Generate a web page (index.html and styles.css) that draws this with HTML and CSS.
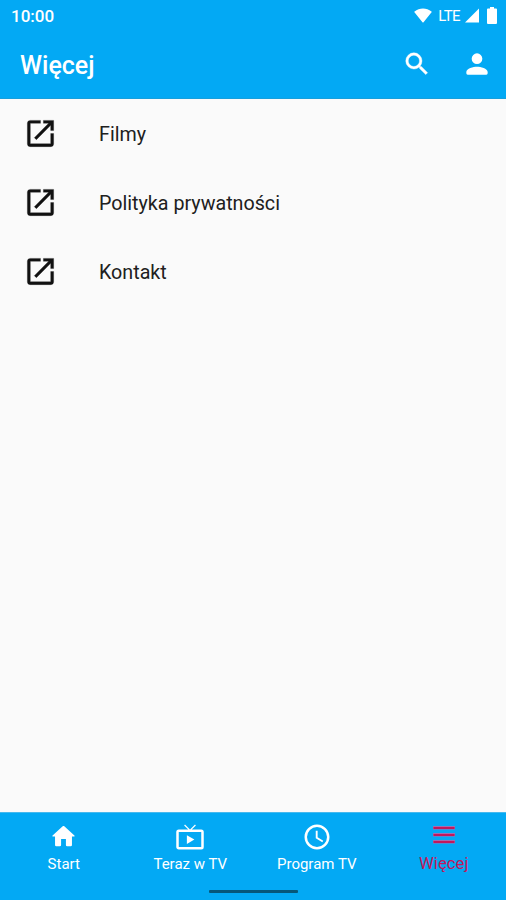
FILE: index.html
```html
<!DOCTYPE html>
<html lang="pl">
<head>
<meta charset="utf-8">
<title>Więcej</title>
<link rel="stylesheet" href="styles.css">
</head>
<body>
<header class="header">
  <div class="status">
    <span class="time">10:00</span>
    <svg class="wifi" viewBox="0 0 20 16"><path d="M.5 4.500Q0 3.900.6 3.500C6-.9 14-.9 19.400 3.500Q20 3.900 19.500 4.500L10.600 15.500Q10 16 9.400 15.500Z"/></svg>
    <span class="lte">LTE</span>
    <svg class="signal" viewBox="0 0 15 15"><path d="M15 0V15H0Z"/></svg>
    <svg class="battery" viewBox="0 0 10 17"><path d="M3 0h4v1.500h2q1 0 1 1V16q0 1-1 1H1q-1 0-1-1V2.500q0-1 1-1h2z"/></svg>
  </div>
  <div class="toolbar">
    <h1 class="title">Więcej</h1>
    <svg class="search" viewBox="0 0 24 24"><path d="M15.500 14h-.79l-.28-.27A6.471 6.471 0 0 0 16 9.500 6.500 6.500 0 1 0 9.500 16c1.610 0 3.090-.59 4.230-1.570l.27.28v.79l5 4.990L20.490 19zm-6 0A4.500 4.500 0 1 1 14 9.500 4.500 4.500 0 0 1 9.500 14z"/></svg>
    <svg class="person" viewBox="0 0 24 24"><path d="M12 12a4 4 0 1 0 0-8 4 4 0 0 0 0 8zm0 2c-2.670 0-8 1.340-8 4v1q0 1 1 1h14q1 0 1-1v-1c0-2.660-5.330-4-8-4z"/></svg>
  </div>
</header>
<main class="list">
  <div class="row"><svg viewBox="0 0 24 24"><path d="M19 19H5V5h7V3H5a2 2 0 0 0-2 2v14a2 2 0 0 0 2 2h14a2 2 0 0 0 2-2v-7h-2zM14 3v2h3.590l-9.830 9.830 1.410 1.410L19 6.410V10h2V3z"/></svg><span>Filmy</span></div>
  <div class="row"><svg viewBox="0 0 24 24"><path d="M19 19H5V5h7V3H5a2 2 0 0 0-2 2v14a2 2 0 0 0 2 2h14a2 2 0 0 0 2-2v-7h-2zM14 3v2h3.590l-9.830 9.830 1.410 1.410L19 6.410V10h2V3z"/></svg><span>Polityka prywatności</span></div>
  <div class="row"><svg viewBox="0 0 24 24"><path d="M19 19H5V5h7V3H5a2 2 0 0 0-2 2v14a2 2 0 0 0 2 2h14a2 2 0 0 0 2-2v-7h-2zM14 3v2h3.590l-9.830 9.830 1.410 1.410L19 6.410V10h2V3z"/></svg><span>Kontakt</span></div>
</main>
<footer class="footer">
  <nav class="nav">
    <div class="tab"><svg class="home" viewBox="0 0 24 24"><path d="M10 19v-5h4v5q0 1 1 1h3q1 0 1-1v-7h1.700c.46 0 .68-.57.33-.87L12.670 3.600c-.38-.34-.96-.34-1.340 0l-8.360 7.530c-.34.3-.13.87.33.87H5v7q0 1 1 1h3q1 0 1-1z"/></svg><span>Start</span></div>
    <div class="tab"><svg viewBox="0 0 24 24"><path d="M21 6h-7.590l3.290-3.290L16 2l-4 4-4-4-.7.710L10.590 6H3a2 2 0 0 0-2 2v12c0 1.100.9 2 2 2h18a2 2 0 0 0 2-2V8a2 2 0 0 0-2-2zm0 14H3V8h18zM9.500 10.500v7l6-3.500z"/></svg><span>Teraz w TV</span></div>
    <div class="tab"><svg viewBox="0 0 24 24"><path d="M11.990 2C6.470 2 2 6.480 2 12s4.470 10 9.990 10C17.520 22 22 17.520 22 12S17.520 2 11.990 2zM12 20a8 8 0 1 1 0-16 8 8 0 0 1 0 16zM12.500 7H11v6l5.250 3.150.75-1.230-4.500-2.670z"/></svg><span>Program TV</span></div>
    <div class="tab active"><svg viewBox="0 0 30 30"><path class="glow" d="M4 4h22v3.500H4zm0 7h22v3.500H4zm0 7h22v3.500H4z"/><path d="M4.500 5h21v2h-21zm0 7h21v2h-21zm0 7h21v2h-21z"/></svg><span>Więcej</span></div>
  </nav>
  <div class="handle"></div>
</footer>
</body>
</html>
```

FILE: styles.css
```css
* { box-sizing: border-box; }
body { margin: 0; height: 900px; display: flex; flex-direction: column; background: #fafafa; color: #202020; font-family: Roboto, sans-serif; overflow: hidden; }
svg { display: block; fill: currentColor; flex: none; }
.header { height: 99px; background: #03a9f4; color: #fff; border-bottom: 1px solid #179fdc; }
.status { height: 30px; display: flex; align-items: center; padding: 1px 9px 0 11px; }
.time { font-size: 17px; font-weight: 500; margin-right: auto; padding-top: 1px; }
.wifi { width: 18px; height: 15px; }
.lte { font-size: 15px; letter-spacing: -0.6px; margin: 0 5px 0 6px; }
.signal { width: 14px; height: 15px; margin-right: 8px; }
.battery { width: 10px; height: 17px; }
.toolbar { height: 68px; display: flex; align-items: center; padding: 0 13px 0 20px; gap: 29px; }
.title { margin: 0 auto 0 0; padding-top: 3px; font-size: 25px; font-weight: 500; }
.search { width: 30px; height: 30px; stroke: currentColor; stroke-width: 0.3; }
.person { width: 32px; height: 32px; }
.list { flex: 1; }
.row { height: 69px; display: flex; align-items: center; padding-left: 23px; gap: 41px; font-size: 19.7px; }
.row span { padding-top: 2px; }
.row svg { width: 35px; height: 35px; color: #111; stroke: currentColor; stroke-width: 0.2; }
.footer { height: 88px; background: #03a9f4; color: #fff; border-top: 1px solid #45b9ef; }
.nav { height: 75px; display: grid; grid-template-columns: repeat(4, 1fr); }
.tab { display: flex; flex-direction: column; align-items: center; padding: 9px 0 0 1px; font-size: 15px; line-height: 18px; }
.tab svg { width: 30px; height: 30px; margin-bottom: 3px; }
.tab .home { width: 29px; height: 29px; margin-bottom: 4px; }
.tab.active { color: #c2185b; font-size: 16.8px; padding-left: 2px; }
.tab.active svg { margin-bottom: 2px; }
.glow { fill: #a56bb0; }
.handle { width: 89px; height: 3px; margin: 2px auto 0; border-radius: 1px; background: #06577a; }
```
